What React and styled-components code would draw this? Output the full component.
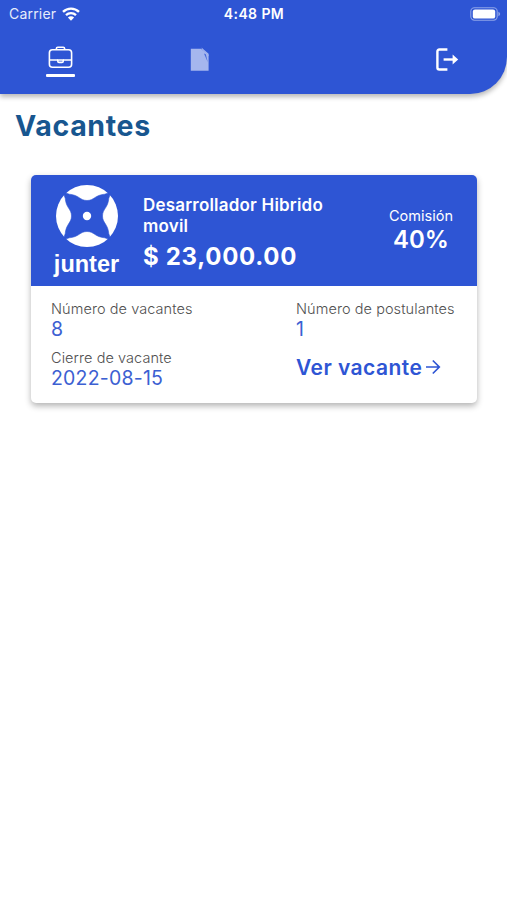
import React from "react";
import styled, { createGlobalStyle } from "styled-components";

const GlobalStyle = createGlobalStyle`
  * {
    box-sizing: border-box;
  }
  body {
    margin: 0;
    background: #fff;
    font-family: Inter, "Liberation Sans", sans-serif;
  }
  svg {
    display: block;
  }
`;

const Page = styled.div`
  min-height: 100vh;
  background: #fff;
`;

const Header = styled.header`
  height: 94px;
  background: #2e55d4;
  color: #fff;
  border-bottom-right-radius: 37px;
  box-shadow: 0 3px 5px rgba(0, 0, 0, 0.28);
`;

const StatusBar = styled.div`
  display: grid;
  grid-template-columns: 1fr auto 1fr;
  align-items: center;
  height: 27px;
  padding: 0 6px 0 9px;
`;

const Carrier = styled.div`
  display: flex;
  align-items: center;
  gap: 6px;
  font-size: 14px;
  letter-spacing: 0.2px;
  color: #e6ecfb;
`;

const Clock = styled.div`
  font-size: 14px;
  font-weight: 600;
  letter-spacing: 0.4px;
  margin-right: 2px;
`;

const BatteryBox = styled.div`
  justify-self: end;
`;

const Nav = styled.nav`
  display: flex;
  align-items: flex-start;
  padding: 18px 48px 0 46px;
`;

const Tab = styled.div`
  position: relative;
  width: 29px;
  height: 32px;
  display: flex;
  justify-content: center;
  margin-right: ${(props) => props.$gap || "0"};
  &::after {
    content: "";
    position: absolute;
    left: 0;
    right: 0;
    bottom: 0.5px;
    height: 2.6px;
    border-radius: 1px;
    background: ${(props) => (props.$active ? "#fff" : "transparent")};
  }
`;

const Logout = styled.div`
  margin-left: auto;
  padding-top: 3px;
`;

const Title = styled.h1`
  margin: 13px 0 0 15px;
  font-size: 28.5px;
  line-height: 38px;
  font-weight: 650;
  letter-spacing: 0.65px;
  color: #18568f;
`;

const Card = styled.section`
  margin: 30px 30px 0 31px;
  border-radius: 5px;
  background: #fff;
  box-shadow: 0 3px 6px rgba(0, 0, 0, 0.3);
`;

const CardTop = styled.div`
  display: flex;
  height: 111px;
  background: #2e55d4;
  color: #fff;
  border-radius: 5px 5px 0 0;
`;

const Brand = styled.div`
  width: 112px;
  padding: 9px 1px 0 0;
  display: flex;
  flex-direction: column;
  align-items: center;
`;

const BrandName = styled.div`
  margin-top: 2px;
  font-family: "Liberation Sans", Arial, sans-serif;
  font-size: 23.5px;
  line-height: 28px;
  font-weight: 700;
`;

const Job = styled.div`
  width: 222px;
  padding-top: 20px;
`;

const JobName = styled.div`
  width: 200px;
  font-size: 17px;
  line-height: 21px;
  font-weight: 600;
  letter-spacing: 0.2px;
`;

const Salary = styled.div`
  margin-top: 4px;
  font-size: 24px;
  line-height: 32px;
  font-weight: 700;
  letter-spacing: 0.7px;
`;

const Commission = styled.div`
  width: 112px;
  padding-top: 31px;
  text-align: center;
`;

const CommissionLabel = styled.div`
  font-size: 14.5px;
  line-height: 20px;
`;

const CommissionValue = styled.div`
  font-size: 24px;
  line-height: 28px;
  font-weight: 600;
`;

const CardBody = styled.div`
  display: grid;
  grid-template-columns: 245px auto;
  grid-template-rows: 49px auto;
  height: 117px;
  padding: 14px 0 0 20px;
`;

const Label = styled.div`
  font-size: 14.5px;
  line-height: 18px;
  font-weight: 300;
  letter-spacing: 0.07px;
  color: #505050;
  white-space: nowrap;
`;

const Value = styled.div`
  font-size: 19.5px;
  line-height: 22px;
  letter-spacing: 0.2px;
  color: #3c60d2;
`;

const Link = styled.a`
  display: flex;
  align-items: center;
  align-self: start;
  gap: 3px;
  height: 36px;
  font-size: 21px;
  font-weight: 600;
  letter-spacing: 0.45px;
  color: #2e55d4;
  white-space: nowrap;
`;

const WifiIcon = () => (
  <svg width="18" height="14" viewBox="0 0 18 14" fill="none">
    <path d="M1 4.9A11.5 11.5 0 0 1 17 4.9" stroke="#fff" strokeWidth="2.4" />
    <path d="M4 8.2A7.2 7.2 0 0 1 14 8.2" stroke="#fff" strokeWidth="2.3" />
    <path d="M9 13.7L5.9 10.6A4.4 4.4 0 0 1 12.1 10.6Z" fill="#fff" />
  </svg>
);

const BatteryIcon = () => (
  <svg width="31" height="14" viewBox="0 0 31 14" fill="none">
    <rect x="0.8" y="0.8" width="26.4" height="12.4" rx="3.6" stroke="#8ea4e8" strokeWidth="1.1" />
    <rect x="2.8" y="2.4" width="22.4" height="9.2" rx="2.2" fill="#fff" />
    <path d="M28.4 4.8Q30.2 5.5 30.2 7T28.4 9.2Z" fill="#8ea4e8" />
  </svg>
);

const BriefcaseIcon = () => (
  <svg width="25" height="24" viewBox="0 0 25 24" fill="none" stroke="#fff" strokeWidth="1.6">
    <rect x="1.4" y="4.7" width="22.2" height="17.6" rx="3" />
    <path d="M8.4 4.7V3.6Q8.4 2.2 9.8 2.2H15.2Q16.6 2.2 16.6 3.6V4.7" />
    <path d="M1.4 15H9.7M15.3 15H23.6" />
    <path d="M9.8 15H15.2V16.2Q15.2 17.4 14 17.4H11Q9.8 17.4 9.8 16.2Z" />
  </svg>
);

const FileIcon = () => (
  <svg width="19" height="27" viewBox="0 0 19 27">
    <path d="M0.8 3.8H11L18.6 10V25.8H0.8Z" fill="#a5b6ee" />
    <path d="M11.4 2.4L18.6 8.8V11L12.2 4.8Z" fill="#a5b6ee" />
    <path d="M14 8.4L15.8 9.2L17.9 17.5Z" fill="#2e55d4" opacity="0.8" />
  </svg>
);

const LogoutIcon = () => (
  <svg width="24" height="24" viewBox="0 0 24 24" fill="none" stroke="#fff" strokeWidth="2.4">
    <path d="M12.4 1.5H4.4Q2.4 1.5 2.4 3.5V19.5Q2.4 21.5 4.4 21.5H12.4" />
    <path d="M8.6 11.5H19" />
    <path d="M17.6 6.5L23.2 11.5L17.6 16.5Z" fill="#fff" stroke="none" />
  </svg>
);

const JunterLogo = () => (
  <svg width="64" height="64" viewBox="-32 -32 64 64">
    <circle r="31" fill="#fff" />
    <path
      d="M-24 -24L-17.7 -21.8C-8 -21 -7 -15.5 0 -15.5S8 -21 17.7 -21.8L24 -24L21.8 -17.7C21 -8 15.5 -7 15.5 0S21 8 21.8 17.7L24 24L17.7 21.8C8 21 7 15.5 0 15.5S-8 21 -17.7 21.8L-24 24L-21.8 17.7C-21 8 -15.5 7 -15.5 0S-21 -8 -21.8 -17.7Z"
      fill="#2e55d4"
      stroke="#2e55d4"
      strokeWidth="0.6"
    />
    <circle r="4.2" fill="#fff" />
  </svg>
);

const ArrowIcon = () => (
  <svg width="16" height="16" viewBox="0 0 16 16" fill="none" stroke="#2e55d4" strokeWidth="1.7">
    <path d="M1 8H14.3M7.8 1.5L14.3 8L7.8 14.5" />
  </svg>
);

const App = () => {
  return (
    <Page>
      <GlobalStyle />
      <Header>
        <StatusBar>
          <Carrier>
            Carrier
            <WifiIcon />
          </Carrier>
          <Clock>4:48 PM</Clock>
          <BatteryBox>
            <BatteryIcon />
          </BatteryBox>
        </StatusBar>
        <Nav>
          <Tab $active $gap="110px">
            <BriefcaseIcon />
          </Tab>
          <Tab>
            <FileIcon />
          </Tab>
          <Logout>
            <LogoutIcon />
          </Logout>
        </Nav>
      </Header>
      <Title>Vacantes</Title>
      <Card>
        <CardTop>
          <Brand>
            <JunterLogo />
            <BrandName>junter</BrandName>
          </Brand>
          <Job>
            <JobName>Desarrollador Hibrido movil</JobName>
            <Salary>$ 23,000.00</Salary>
          </Job>
          <Commission>
            <CommissionLabel>Comisión</CommissionLabel>
            <CommissionValue>40%</CommissionValue>
          </Commission>
        </CardTop>
        <CardBody>
          <div>
            <Label>Número de vacantes</Label>
            <Value>8</Value>
          </div>
          <div>
            <Label>Número de postulantes</Label>
            <Value>1</Value>
          </div>
          <div>
            <Label>Cierre de vacante</Label>
            <Value>2022-08-15</Value>
          </div>
          <Link>
            Ver vacante
            <ArrowIcon />
          </Link>
        </CardBody>
      </Card>
    </Page>
  );
};

export default App;
